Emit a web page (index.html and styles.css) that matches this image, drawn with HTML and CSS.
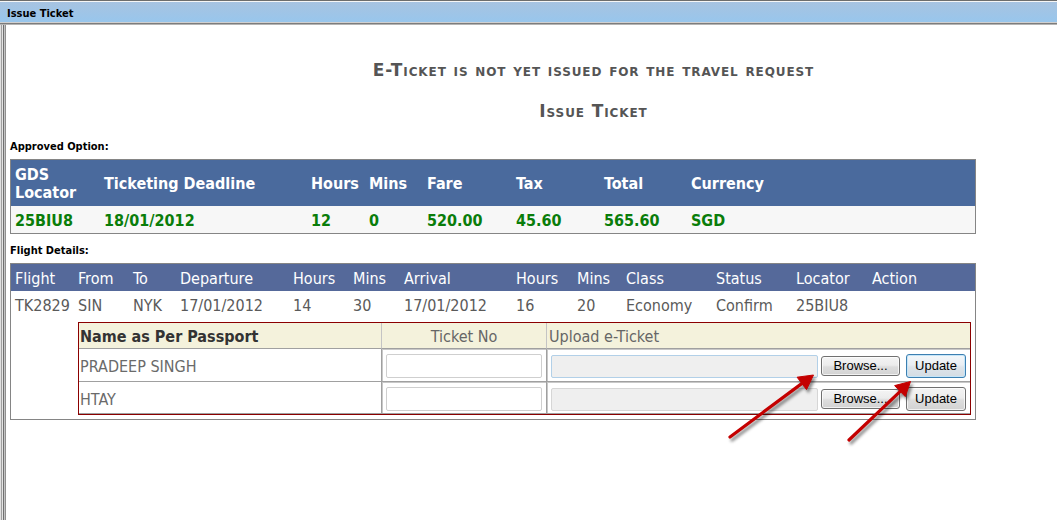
FILE: index.html
```html
<!DOCTYPE html>
<html>
<head>
<meta charset="utf-8">
<title>Issue Ticket</title>
<link rel="stylesheet" href="styles.css">
</head>
<body>
<div class="titlebar">Issue Ticket</div>
<div class="frame">
  <div class="headings">
    <h2 class="heading heading-main">E-Ticket is not yet issued for the travel request</h2>
    <h2 class="heading heading-sub">Issue Ticket</h2>
  </div>

  <div class="label label-approved">Approved Option:</div>
  <table class="approved">
    <colgroup>
      <col class="a1"><col class="a2"><col class="a3"><col class="a4"><col class="a5"><col class="a6"><col class="a7"><col>
    </colgroup>
    <thead>
      <tr>
        <th>GDS<br>Locator</th>
        <th>Ticketing Deadline</th>
        <th>Hours</th>
        <th>Mins</th>
        <th>Fare</th>
        <th>Tax</th>
        <th>Total</th>
        <th>Currency</th>
      </tr>
    </thead>
    <tbody>
      <tr>
        <td>25BIU8</td>
        <td>18/01/2012</td>
        <td>12</td>
        <td>0</td>
        <td>520.00</td>
        <td>45.60</td>
        <td>565.60</td>
        <td>SGD</td>
      </tr>
    </tbody>
  </table>

  <div class="label label-flight">Flight Details:</div>
  <table class="flights">
    <colgroup>
      <col class="f1"><col class="f2"><col class="f3"><col class="f4"><col class="f5"><col class="f6"><col class="f7"><col class="f8"><col class="f9"><col class="f10"><col class="f11"><col class="f12"><col>
    </colgroup>
    <thead>
      <tr>
        <th>Flight</th><th>From</th><th>To</th><th>Departure</th><th>Hours</th><th>Mins</th><th>Arrival</th><th>Hours</th><th>Mins</th><th>Class</th><th>Status</th><th>Locator</th><th>Action</th>
      </tr>
    </thead>
    <tbody>
      <tr>
        <td>TK2829</td><td>SIN</td><td>NYK</td><td>17/01/2012</td><td>14</td><td>30</td><td>17/01/2012</td><td>16</td><td>20</td><td>Economy</td><td>Confirm</td><td>25BIU8</td><td></td>
      </tr>
      <tr>
        <td></td>
        <td colspan="12" class="nest">
          <table class="pax">
            <colgroup><col class="p1"><col class="p2"><col></colgroup>
            <thead>
              <tr>
                <th class="pax-name">Name as Per Passport</th>
                <th class="pax-ticket">Ticket No</th>
                <th class="pax-upload">Upload e-Ticket</th>
              </tr>
            </thead>
            <tbody>
              <tr class="row1">
                <td class="name">PRADEEP SINGH</td>
                <td class="inp"><input class="ticket" type="text"></td>
                <td class="inp">
                  <div class="upload">
                    <div class="fbox focus"></div>
                    <button class="btn browse" type="button">Browse...</button>
                    <button class="btn update hot" type="button">Update</button>
                  </div>
                </td>
              </tr>
              <tr class="row2">
                <td class="name">HTAY</td>
                <td class="inp"><input class="ticket" type="text"></td>
                <td class="inp">
                  <div class="upload">
                    <div class="fbox"></div>
                    <button class="btn browse" type="button">Browse...</button>
                    <button class="btn update" type="button">Update</button>
                  </div>
                </td>
              </tr>
            </tbody>
          </table>
        </td>
      </tr>
    </tbody>
  </table>
</div>

<svg class="arrows" width="1057" height="520" viewBox="0 0 1057 520" aria-hidden="true">
  <g class="arrow">
    <line x1="730" y1="437" x2="803" y2="382.6" stroke="#c40000" stroke-width="3.2" stroke-linecap="round"/>
    <polygon points="813.5,375 806.5,389.6 797.1,377.2" fill="#c40000" stroke="#c40000" stroke-width="1" stroke-linejoin="round"/>
  </g>
  <g class="arrow">
    <line x1="849" y1="440" x2="901" y2="390.6" stroke="#c40000" stroke-width="3.2" stroke-linecap="round"/>
    <polygon points="910.5,381.5 905.3,396.6 894.6,385.6" fill="#c40000" stroke="#c40000" stroke-width="1" stroke-linejoin="round"/>
  </g>
</svg>
</body>
</html>
```

FILE: styles.css
```css
* { box-sizing: border-box; }

html, body {
  margin: 0;
  padding: 0;
  background: #fff;
}

body {
  width: 1057px;
  height: 520px;
  overflow: hidden;
  position: relative;
  font-family: "DejaVu Sans Condensed", "DejaVu Sans", sans-serif;
  color: #000;
}

.titlebar {
  height: 25px;
  padding: 8px 0 0 7px;
  font-size: 11px;
  line-height: 12px;
  font-weight: bold;
  background: linear-gradient(to bottom,
    #6d6d6d 0, #6d6d6d 1px,
    #f6f6f6 1px, #f6f6f6 2px,
    #a7c3e1 2px, #98c6ec 22px,
    #d0d0d0 22px, #d0d0d0 23px,
    #7c7c7c 23px, #7c7c7c 24px,
    #b4b4b4 24px, #b4b4b4 25px);
}

.frame {
  display: flow-root;
  min-height: 495px;
  padding-left: 10px;
  background: linear-gradient(to right,
    #e0e0e0 0, #e0e0e0 1px,
    #a0a0a0 1px, #a0a0a0 2px,
    #e4e4e4 2px, #e4e4e4 3px,
    #707070 3px, #707070 4px,
    #c4c4c4 4px, #c4c4c4 5px,
    #909090 5px, #909090 6px,
    #ffffff 6px);
}

.headings {
  margin-left: 120px;
  text-align: center;
  color: #555;
}

.heading {
  margin: 0;
  font-family: "DejaVu Sans", sans-serif;
  font-size: 17px;
  line-height: 20px;
  letter-spacing: 0.9px;
  font-weight: bold;
  font-variant: small-caps;
}

.heading-main { margin-top: 35px; }
.heading-sub { margin-top: 21px; }

.label {
  font-size: 11px;
  line-height: 14px;
  font-weight: bold;
}

.label-approved { margin-top: 19px; }
.label-flight { margin-top: 10px; }

table {
  border-spacing: 0;
  table-layout: fixed;
}

/* Approved option */
.approved {
  margin-top: 5px;
  width: 966px;
  border: 1px solid #858585;
}

.approved .a1 { width: 89px; }
.approved .a2 { width: 207px; }
.approved .a3 { width: 58px; }
.approved .a4 { width: 58px; }
.approved .a5 { width: 89px; }
.approved .a6 { width: 88px; }
.approved .a7 { width: 87px; }

.approved th {
  background: #4a6a9d;
  color: #fff;
  font-size: 16px;
  line-height: 18px;
  font-weight: bold;
  text-align: left;
  vertical-align: middle;
  padding: 6px 4px 4px;
}

.approved td {
  background: #f7f7f7;
  color: #0a7d0a;
  font-size: 16px;
  line-height: 19px;
  font-weight: bold;
  padding: 5px 4px 3px;
}

/* Flight details */
.flights {
  margin-top: 5px;
  width: 966px;
  border: 1px solid #858585;
}

.flights .f1 { width: 63px; }
.flights .f2 { width: 55px; }
.flights .f3 { width: 47px; }
.flights .f4 { width: 113px; }
.flights .f5 { width: 60px; }
.flights .f6 { width: 51px; }
.flights .f7 { width: 112px; }
.flights .f8 { width: 61px; }
.flights .f9 { width: 49px; }
.flights .f10 { width: 90px; }
.flights .f11 { width: 80px; }
.flights .f12 { width: 76px; }

.flights > thead th {
  background: #55699a;
  color: #fff;
  font-size: 16px;
  line-height: 19px;
  font-weight: normal;
  text-align: left;
  padding: 5px 4px 3px;
}

.flights > tbody > tr > td {
  color: #5a5a5a;
  font-size: 16px;
  line-height: 19px;
  padding: 5px 4px 3px;
  white-space: nowrap;
}

.flights > tbody > tr > td.nest {
  padding: 4px;
}

/* Passenger table */
.pax {
  width: 893px;
  border: 1px solid #8b0000;
}

.pax .p1 { width: 303px; }
.pax .p2 { width: 165px; }

.pax th {
  height: 26px;
  background: #f4f2dc;
  font-size: 16px;
  line-height: 19px;
  padding: 1px 1px 0;
  border-bottom: 1px solid #a0a0a0;
  border-right: 1px solid #c4c4c4;
  vertical-align: middle;
}

.pax th.pax-name {
  color: #333;
  font-weight: bold;
  text-align: left;
}

.pax th.pax-ticket {
  color: #666;
  font-weight: normal;
  text-align: center;
}

.pax th.pax-upload {
  color: #666;
  font-weight: normal;
  text-align: left;
  padding-left: 2px;
  border-right: 0;
}

.pax td {
  font-size: 16px;
  line-height: 19px;
  color: #6a6a6a;
  border-bottom: 1px solid #a0a0a0;
  border-right: 1px solid #a0a0a0;
  vertical-align: middle;
}

.pax td:last-child { border-right: 0; }

.pax td.name { padding: 3px 1px 0; }

.pax td.inp {
  padding: 5px 3px 3px 4px;
  box-shadow: inset 1px 1px 0 #c8c8c8;
}

.pax .row2 td.inp { padding: 5px 3px 2px 4px; }

.ticket {
  display: block;
  width: 156px;
  height: 24px;
  margin: 0;
  border: 1px solid #cfcfcf;
  border-radius: 2px;
  background: #fff;
}

.upload {
  display: flex;
  align-items: center;
  height: 24px;
}

.fbox {
  width: 267px;
  height: 23px;
  margin-right: 3px;
  background: #efefef;
  border: 1px solid #d6d6d6;
  border-radius: 2px;
}

.fbox.focus { border-color: #b2d0e8; }

.btn {
  margin: 0;
  padding: 0;
  font-family: "Liberation Sans", Arial, sans-serif;
  font-size: 13px;
  color: #000;
  border: 1px solid #707070;
  border-radius: 3px;
  background: linear-gradient(to bottom, #f4f4f4 0, #ececec 45%, #dddddd 55%, #d2d2d2 100%);
  box-shadow: inset 0 0 0 1px rgba(255,255,255,0.7);
}

.browse {
  width: 79px;
  height: 20px;
  margin-right: 6px;
  line-height: 18px;
}

.update {
  width: 60px;
  height: 24px;
  line-height: 22px;
}

.update.hot {
  border-color: #3c7fb1;
  background: linear-gradient(to bottom, #f3f7fa 0, #e9eef3 45%, #dde4ea 55%, #d4dce3 100%);
  box-shadow: inset 0 0 0 1px #c5e5f8;
}

/* Annotation arrows drawn over the screenshot */
.arrows {
  position: absolute;
  left: 0;
  top: 0;
  pointer-events: none;
}

.arrow {
  filter: drop-shadow(2px 3px 1.5px rgba(0, 0, 0, 0.45));
}
```
